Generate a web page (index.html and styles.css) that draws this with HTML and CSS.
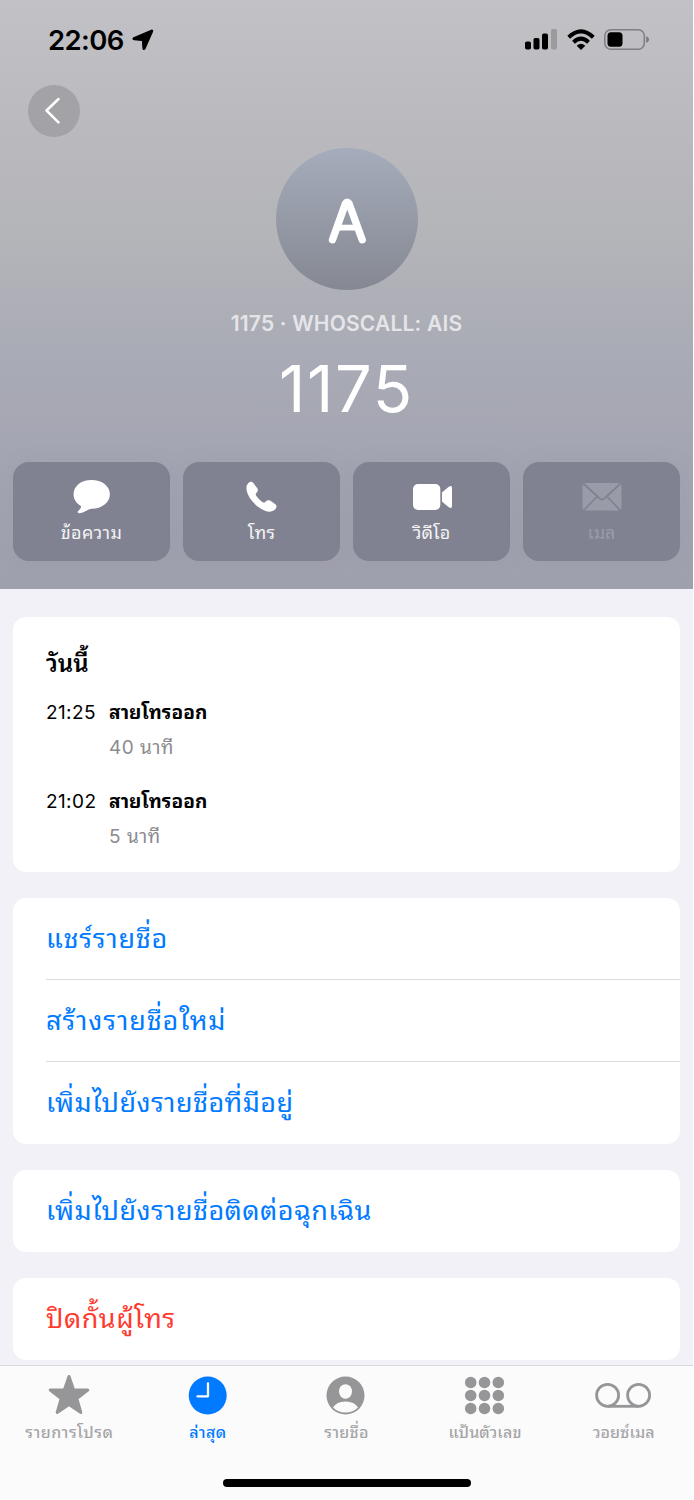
FILE: index.html
```html
<!DOCTYPE html>
<html lang="th">
<head>
<meta charset="utf-8">
<title>1175</title>
<link rel="stylesheet" href="styles.css">
</head>
<body>
<div class="screen">
  <header class="hero">
    <div class="status">
      <span class="clock">22:06</span>
      <svg class="arrow" width="22" height="22" viewBox="0 0 22 22"><path d="M1.700 8.700 19.500 1.200Q21 .9 20.500 2.500L13 19.600Q11.600 21.500 11 19.300L10.500 11.500 2.200 10.700Q0 10 1.700 8.700Z" stroke="#000" stroke-width="1.200" stroke-linejoin="round"/></svg>
      <svg class="signal" width="32" height="21" viewBox="0 0 32 21"><rect y="12.500" width="6" height="8" rx="1.800"/><rect x="8.500" y="9" width="6" height="11.500" rx="1.800"/><rect x="17" y="4.500" width="6" height="16" rx="1.800"/><rect x="26" y="0" width="6" height="20.500" rx="1.800" fill="#9b9b9f"/></svg>
      <svg class="wifi" width="28" height="22" viewBox="0 0 28 22"><g fill="none" stroke="#000" stroke-width="4"><path d="M1.700 8.200Q14-3.500 26.300 8.200"/><path d="M6.500 13.200Q14 6.200 21.500 13.200"/></g><path d="M14 21 9.700 16.700Q14 13 18.300 16.700Z"/></svg>
      <svg class="battery" width="46" height="21" viewBox="0 0 46 21"><rect x=".8" y=".8" width="39.500" height="19.400" rx="6" fill="none" stroke="#7f7f82" stroke-width="1.500"/><rect x="3.500" y="3.300" width="15" height="14.500" rx="3.500"/><path d="M42 7.200Q45 8 45 10.500T42 13.800Z" fill="#7f7f82"/></svg>
    </div>
    <div class="nav"><div class="back"><svg width="52" height="52" viewBox="0 0 52 52"><path d="M30.500 14 18.500 25.500 30.500 37.300" fill="none" stroke="#fff" stroke-width="2.500" stroke-linecap="round" stroke-linejoin="round"/></svg></div></div>
    <div class="avatar"><svg width="142" height="142" viewBox="0 0 142 142" role="img" aria-label="A"><path d="M56.500 91.800 69.500 55.500Q71.200 53 73 55.500L86.200 91.800" fill="none" stroke="#fff" stroke-width="7.400" stroke-linecap="round" stroke-linejoin="round"/><path d="M62 79.600H81" stroke="#fff" stroke-width="5.800"/></svg></div>
    <div class="sub">1175 · WHOSCALL: AIS</div>
    <h1 class="title">1175</h1>
    <div class="actions">
      <div class="action"><svg width="40" height="36" viewBox="0 0 40 36"><path d="M19.500 1C30 1 37.900 7 37.900 15.300S30 29.800 19.500 29.800C16 30 12 34 7.300 34.200 5 34.200 5.200 33 6.500 31.700 8.200 30 9.200 28.500 9 27 4.300 24.500 1.600 20.500 1.600 15.300 1.600 7 9 1 19.500 1Z" fill="#fff"/></svg><span class="l1">ข้อความ</span></div>
      <div class="action"><svg width="40" height="36" viewBox="0 0 40 36"><path d="M6 4.500C8 2.300 10 2.300 11.700 4.500L15.300 9.200C16.400 11 15.800 12.400 14.300 14 13.400 15 13.600 16 14.500 17.200 16.200 19.400 18.300 21.500 20.300 23 21.500 23.900 22.300 23.700 23.500 22.700 25.500 20.900 27 20.900 28.800 22L33 25C35.200 26.700 34.900 28.600 33 30.500 29.500 33.800 24 33.400 17.500 28.800 10.500 23.800 5.800 17.500 4.700 11.800 4.100 8.600 4.500 6.200 6 4.500Z" fill="#fff"/></svg><span class="l2">โทร</span></div>
      <div class="action"><svg width="40" height="36" viewBox="0 0 40 36"><rect x="1" y="5" width="27.300" height="26" rx="5" fill="#fff"/><path d="M30 13.500 36.500 8Q40 5.800 40 9V27Q40 30.200 36.500 28L30 22.500Z" fill="#fff"/></svg><span class="l3">วิดีโอ</span></div>
      <div class="action off"><svg width="40" height="36" viewBox="0 0 40 36"><rect x=".5" y="4" width="39" height="27.500" rx="3" fill="#9a9ba8"/><path d="M1.500 4.500 16.500 18.500Q20 22.500 23.500 18.500L38.500 4.500M1.500 31.500 14.500 18M38.500 31.500 25.500 18" fill="none" stroke="#808291" stroke-width="1.800"/></svg><span class="l4">เมล</span></div>
    </div>
  </header>
  <main class="content">
    <section class="card log">
      <h2 class="day"><span>วันนี้</span></h2>
      <div class="call"><time>21:25</time><div><div class="kind"><span>สายโทรออก</span></div><div class="dur"><span>40 นาที</span></div></div></div>
      <div class="call"><time>21:02</time><div><div class="kind"><span>สายโทรออก</span></div><div class="dur"><span>5 นาที</span></div></div></div>
    </section>
    <section class="card">
      <div class="row"><span class="r1">แชร์รายชื่อ</span></div>
      <div class="row"><span class="r2">สร้างรายชื่อใหม่</span></div>
      <div class="row"><span class="r3">เพิ่มไปยังรายชื่อที่มีอยู่</span></div>
    </section>
    <section class="card"><div class="row"><span class="r4">เพิ่มไปยังรายชื่อติดต่อฉุกเฉิน</span></div></section>
    <section class="card"><div class="row danger"><span class="r5">ปิดกั้นผู้โทร</span></div></section>
  </main>
  <footer class="tabbar">
    <nav class="tabs">
      <div class="tab"><svg width="58" height="42" viewBox="0 0 58 42"><path d="M29 2.500 33.700 16H47.800L36.800 24.500 40.800 38.500 29 30.500 17.200 38.500 21.200 24.500 10.200 16H24.300Z" fill="#969698" stroke="#969698" stroke-width="3" stroke-linejoin="round"/></svg><span class="t1">รายการโปรด</span></div>
      <div class="tab active"><svg width="58" height="42" viewBox="0 0 58 42"><circle cx="28.700" cy="21.500" r="19" fill="#007aff"/><path d="M29 9.500V22.300H18.500" fill="none" stroke="#fff" stroke-width="2.300" stroke-linecap="round" stroke-linejoin="round"/></svg><span class="t2">ล่าสุด</span></div>
      <div class="tab"><svg width="58" height="42" viewBox="0 0 58 42"><circle cx="28.500" cy="21.500" r="19" fill="#969698"/><ellipse cx="28.500" cy="17.500" rx="6.500" ry="7.300" fill="#fbfbfc"/><path d="M16 33.500Q19.500 27.500 28.500 27.500T41 33.500Q36 38.500 28.500 38.500T16 33.500Z" fill="#fbfbfc"/></svg><span class="t3">รายชื่อ</span></div>
      <div class="tab"><svg width="58" height="42" viewBox="0 0 58 42" fill="#969698"><circle cx="14.700" cy="8.500" r="5.800"/><circle cx="28.500" cy="8.500" r="5.800"/><circle cx="42.300" cy="8.500" r="5.800"/><circle cx="14.700" cy="21.500" r="5.800"/><circle cx="28.500" cy="21.500" r="5.800"/><circle cx="42.300" cy="21.500" r="5.800"/><circle cx="14.700" cy="34.500" r="5.800"/><circle cx="28.500" cy="34.500" r="5.800"/><circle cx="42.300" cy="34.500" r="5.800"/></svg><span class="t4">แป้นตัวเลข</span></div>
      <div class="tab"><svg width="58" height="42" viewBox="0 0 58 42" fill="none" stroke="#969698" stroke-width="2.800"><circle cx="12.600" cy="21.300" r="11"/><circle cx="43.600" cy="21.300" r="11"/><path d="M12.600 32.300H43.600"/></svg><span class="t5">วอยซ์เมล</span></div>
    </nav>
    <div class="home"></div>
  </footer>
</div>
</body>
</html>
```
FILE: styles.css
```css
* { box-sizing: border-box; }
body { margin: 0; background: #fff; font-family: Inter, "Noto Sans Thai Looped", "Noto Sans Thai", sans-serif; }
svg { display: block; }
.screen { width: 693px; height: 1500px; background: #f2f1f7; display: flex; flex-direction: column; overflow: hidden; }
.hero { height: 589px; flex: none; background: linear-gradient(#c1c1c6 0, #b9b9bd 25%, #b4b5b9 40%, #a8aab5 62%, #a4a5b2 78%, #9fa0ad 100%); }
.status { height: 79px; padding-left: 48px; display: flex; align-items: center; }
.clock { width: 84px; font-size: 27.5px; font-weight: 600; line-height: 40px; letter-spacing: -.6px; white-space: nowrap; }
.arrow { margin-right: 371px; }
.signal { margin-right: 10px; }
.wifi { margin-right: 9px; }
.nav { height: 69px; padding: 6px 0 0 28px; }
.back { width: 52px; height: 52px; border-radius: 50%; background: #a3a3a7; }
.avatar { width: 142px; height: 142px; margin: 0 auto; border-radius: 50%; background: linear-gradient(#a5acbb, #858892); }
.sub { height: 30px; margin-top: 19px; line-height: 30px; text-align: center; color: #e5e5e9; font-size: 21px; font-weight: 600; letter-spacing: .2px; white-space: nowrap; }
.title { height: 80px; margin: 10px 0 0; line-height: 80px; text-align: center; color: #fff; font-size: 65px; font-weight: 400; letter-spacing: 1.6px; }
.actions { display: flex; gap: 13px; padding: 33px 13px 0; }
.action { width: 157px; height: 99px; border-radius: 16px; background: #808291; box-shadow: 0 0 18px rgba(128,130,145,.13); padding-top: 17px; display: flex; flex-direction: column; align-items: center; color: #f3f3f5; font-size: 18px; }
.action span { line-height: 30px; margin-top: 3px; white-space: nowrap; }
.action .l1 { letter-spacing: .4px; }
.action .l2 { letter-spacing: .3px; }
.off { color: #9a9ba8; }
.content { flex: none; height: 776px; padding: 28px 13px 0; display: flex; flex-direction: column; gap: 26px; overflow: hidden; }
.card { flex: none; width: 667px; border-radius: 13px; background: #fff; padding-left: 33px; overflow: hidden; }
.log { height: 255px; padding-top: 27px; }
.day { height: 40px; margin: 0 0 12px; font-size: 24px; font-weight: 600; line-height: 40px; }
.call { display: flex; height: 89px; font-size: 19px; }
.call time { width: 63px; line-height: 34px; letter-spacing: .4px; }
.kind { font-weight: 700; height: 34px; line-height: 34px; letter-spacing: .1px; }
.dur { color: #8b8b8e; height: 36px; line-height: 35px; letter-spacing: .5px; }
.row { height: 82px; line-height: 82px; font-size: 27px; color: #007aff; white-space: nowrap; }
.row:not(:last-child) { border-bottom: 1px solid #dcdcdf; }
.r1 { letter-spacing: .75px; }
.r2 { letter-spacing: .9px; }
.r3 { letter-spacing: .45px; }
.r4 { letter-spacing: .45px; }
.r5 { letter-spacing: .5px; }
.danger { color: #ff3b30; }
.tabbar { flex: 1; background: #fbfbfc; border-top: 1px solid #d8d8dd; }
.tabs { display: flex; padding-top: 8px; }
.tab { flex: 1; display: flex; flex-direction: column; align-items: center; color: #a5a5a7; font-size: 16px; font-weight: 500; }
.tab span { line-height: 28px; margin-top: 2px; white-space: nowrap; }
.active { color: #007aff; }
.t1 { letter-spacing: .5px; }
.t2 { letter-spacing: .4px; }
.t3 { letter-spacing: .3px; }
.t4 { letter-spacing: .1px; }
.home { width: 248px; height: 8px; margin: 33px auto 0; border-radius: 4px; background: #000; }
```
